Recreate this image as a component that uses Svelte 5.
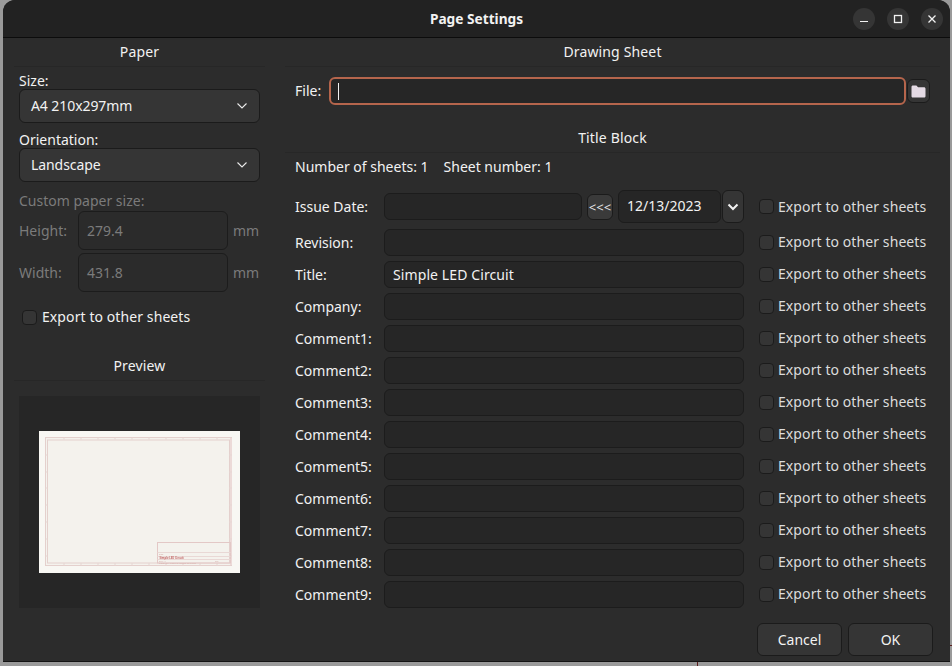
<script lang="ts">
	const rows = [
		{ label: 'Revision:', value: '' },
		{ label: 'Title:', value: 'Simple LED Circuit' },
		{ label: 'Company:', value: '' },
		{ label: 'Comment1:', value: '' },
		{ label: 'Comment2:', value: '' },
		{ label: 'Comment3:', value: '' },
		{ label: 'Comment4:', value: '' },
		{ label: 'Comment5:', value: '' },
		{ label: 'Comment6:', value: '' },
		{ label: 'Comment7:', value: '' },
		{ label: 'Comment8:', value: '' },
		{ label: 'Comment9:', value: '' }
	];
	// tick marks along the drawing sheet frame
	const xTicks = [17, 34, 51, 68, 85, 102, 119, 136, 153, 170];
	const yTicks = [24, 41, 57, 74, 91, 108, 125];
</script>

<span class="behind behind--right"></span>
<span class="behind behind--bottom"></span>

<div class="window">
	<header class="titlebar">
		<div class="titlebar__title">Page Settings</div>
		<div class="titlebar__buttons">
			<button class="wm" aria-label="Minimize">
				<svg width="10" height="10" viewBox="0 0 10 10"><path d="M1 7.500h8" stroke="#f2f2f2" stroke-width="1.200" fill="none" /></svg>
			</button>
			<button class="wm" aria-label="Maximize">
				<svg width="10" height="10" viewBox="0 0 10 10"><rect x="1.500" y="1.500" width="7" height="7" stroke="#f2f2f2" stroke-width="1.300" fill="none" /></svg>
			</button>
			<button class="wm" aria-label="Close">
				<svg width="10" height="10" viewBox="0 0 10 10"><path d="M1.500 1.500l7 7M8.500 1.500l-7 7" stroke="#f2f2f2" stroke-width="1.300" fill="none" /></svg>
			</button>
		</div>
	</header>

	<div class="content">
		<section class="left">
			<h2 class="section-title">Paper</h2>
			<div class="left__body">
				<div class="caption caption--first">Size:</div>
				<div class="combo">
					<span>A4 210x297mm</span>
					<svg width="12" height="8" viewBox="0 0 12 8"><path d="M1.500 1.500L6 6l4.500-4.500" stroke="#e8e8e8" stroke-width="1.100" fill="none" /></svg>
				</div>
				<div class="caption caption--orient">Orientation:</div>
				<div class="combo">
					<span>Landscape</span>
					<svg width="12" height="8" viewBox="0 0 12 8"><path d="M1.500 1.500L6 6l4.500-4.500" stroke="#e8e8e8" stroke-width="1.100" fill="none" /></svg>
				</div>
				<div class="caption caption--custom disabled">Custom paper size:</div>
				<div class="size-row disabled">
					<span class="size-row__label">Height:</span>
					<div class="size-row__input">279.4</div>
					<span>mm</span>
				</div>
				<div class="size-row disabled">
					<span class="size-row__label">Width:</span>
					<div class="size-row__input">431.8</div>
					<span>mm</span>
				</div>
				<label class="check check--left"><span class="check__box"></span>Export to other sheets</label>
			</div>
			<h2 class="section-title section-title--preview">Preview</h2>
			<div class="preview">
				<svg class="sheet" width="201" height="142" viewBox="0 0 201 142">
					<rect width="201" height="142" fill="#f8f7f3" />
					<rect x="6" y="6" width="187" height="129" fill="#f4f2ed" />
					<g class="sheet__ink">
						<rect x="6.500" y="6.500" width="186" height="128" fill="none" stroke="#e4d0cd" />
						<rect x="8.500" y="9" width="182" height="123" fill="none" stroke="#e4d0cd" />
						<rect x="191" y="7" width="2" height="127" fill="#ecdad8" />
						{#each xTicks as x}
							<path d="M{x + 8} 6.500v2M{x + 8} 132v2.500" stroke="#e6d6d3" fill="none" />
						{/each}
						{#each yTicks as y}
							<path d="M6.500 {y}h2M190 {y}h3" stroke="#e6d6d3" fill="none" />
						{/each}
						<rect x="118.500" y="111.500" width="73" height="20.500" fill="none" stroke="#e3c8c6" />
						<path d="M118.500 121.500h73M118.500 125.500h73M118.500 128.500h73" stroke="#e9d8d5" fill="none" />
						<text class="sheet__small" x="120" y="124">Date:</text>
						<text class="sheet__title" x="120.500" y="127.800">Simple LED Circuit</text>
						<text class="sheet__small" x="120" y="130.500">Size: A4</text>
						<text class="sheet__small" x="176" y="130.500">Rev:</text>
						<text class="sheet__small" x="120" y="132.500">KiCad E.D.A. kicad 7.0.9 simple_led_circuit</text>
					</g>
				</svg>
			</div>
		</section>

		<section class="right">
			<h2 class="section-title">Drawing Sheet</h2>
			<div class="file-row">
				<span class="file-row__label">File:</span>
				<div class="file-input"><span class="caret"></span></div>
				<button class="folder" aria-label="Browse">
					<svg width="15" height="13" viewBox="0 0 15 13"><path d="M.500 2C.500 1 1.100.500 2 .500h3.400L7 2.200h6c.900 0 1.500.600 1.500 1.500v7.300c0 1-.600 1.500-1.500 1.500H2c-.900 0-1.500-.500-1.500-1.500z" fill="#e4dae4" /></svg>
				</button>
			</div>
			<h2 class="section-title section-title--block">Title Block</h2>
			<div class="sheets">
				<span>Number of sheets: 1</span>
				<span>Sheet number: 1</span>
			</div>

			<div class="row row--date">
				<span class="row__label">Issue Date:</span>
				<div class="date">
					<input class="field field--date" readonly />
					<button class="copy-date">&lt;&lt;&lt;</button>
					<div class="date-picker">12/13/2023</div>
					<button class="date-drop" aria-label="Pick date">
						<svg width="12" height="8" viewBox="0 0 12 8"><path d="M1.500 1.500L6 6l4.500-4.500" stroke="#f2f2f2" stroke-width="2" fill="none" /></svg>
					</button>
				</div>
				<label class="check"><span class="check__box"></span>Export to other sheets</label>
			</div>
			{#each rows as row}
				<div class="row">
					<span class="row__label">{row.label}</span>
					<input class="field" value={row.value} readonly />
					<label class="check"><span class="check__box"></span>Export to other sheets</label>
				</div>
			{/each}

			<div class="actions">
				<button class="action">Cancel</button>
				<button class="action">OK</button>
			</div>
		</section>
	</div>
</div>

<style>
	:global(body) {
		margin: 0;
		background: #9a9a9a;
	}
	/* bits of the window underneath that peek out past the dialog */
	.behind {
		position: absolute;
		background: #5c1f1f;
	}
	.behind--right {
		left: 950px;
		top: 645px;
		width: 2px;
		height: 1px;
	}
	.behind--bottom {
		left: 697px;
		top: 662px;
		width: 1px;
		height: 4px;
	}
	.window {
		box-sizing: border-box;
		width: 947px;
		height: 662px;
		margin-left: 3px;
		display: flex;
		flex-direction: column;
		background: #2c2c2c;
		border-bottom: 1px solid #141414;
		border-radius: 12px 12px 0 0;
		overflow: hidden;
		color: #f2f2f2;
		font-family: 'Noto Sans', sans-serif;
		font-size: 14px;
		line-height: 20px;
		position: relative;
	}
	.titlebar {
		flex: none;
		height: 37px;
		position: relative;
		display: flex;
		align-items: center;
		justify-content: flex-end;
		background: #222222;
		border-bottom: 1px solid #0c0c0c;
	}
	.titlebar__title {
		position: absolute;
		left: 0;
		right: 0;
		text-align: center;
		font-weight: 700;
		font-size: 13.7px;
	}
	.titlebar__buttons {
		display: flex;
		gap: 12px;
		padding-right: 7px;
		position: relative;
	}
	.wm {
		width: 22px;
		height: 22px;
		padding: 0;
		border: 0;
		border-radius: 50%;
		background: #353535;
		display: flex;
		align-items: center;
		justify-content: center;
	}
	.content {
		flex: 1;
		display: flex;
		min-height: 0;
	}
	.left {
		flex: none;
		width: 251px;
		margin-left: 11px;
		display: flex;
		flex-direction: column;
	}
	.right {
		flex: none;
		width: 655px;
		margin-left: 20px;
		display: flex;
		flex-direction: column;
	}
	.section-title {
		margin: 0;
		height: 29px;
		box-sizing: border-box;
		border-bottom: 1px solid #272727;
		font-size: 14px;
		font-weight: 400;
		line-height: 28px;
		letter-spacing: 0.15px;
		text-align: center;
	}
	.section-title--preview {
		margin-top: 25px;
	}
	.section-title--block {
		margin-top: 19px;
	}
	.left__body {
		padding: 0 5px;
		display: flex;
		flex-direction: column;
	}
	.caption {
		height: 16px;
		line-height: 16px;
	}
	.caption--first {
		margin-top: 6px;
	}
	.caption--orient {
		margin-top: 9px;
	}
	.caption--custom {
		margin-top: 11px;
		margin-bottom: 2px;
	}
	.disabled {
		color: #7b7b7b;
	}
	.combo {
		box-sizing: border-box;
		height: 34px;
		width: 241px;
		display: flex;
		align-items: center;
		justify-content: space-between;
		padding: 0 11px;
		background: #353535;
		border: 1px solid #1b1b1b;
		border-radius: 6px;
		letter-spacing: -0.08px;
	}
	.size-row {
		display: flex;
		align-items: center;
		height: 39px;
		margin-bottom: 3px;
	}
	.size-row__label {
		width: 59px;
	}
	.size-row__input {
		box-sizing: border-box;
		width: 150px;
		height: 39px;
		margin-right: 5px;
		padding: 9px 8px;
		border: 1px solid #1c1c1c;
		border-radius: 6px;
		background: #2b2b2b;
	}
	.check {
		display: flex;
		align-items: center;
		gap: 5px;
		white-space: nowrap;
		color: #f2f2f2;
		letter-spacing: 0.09px;
	}
	.row .check {
		color: #dcdcdc;
		gap: 4px;
		margin: 0 0 1px 15px;
	}
	.row--date .check {
		margin-bottom: 0;
	}
	.check--left {
		margin: 12px 0 0 3px;
	}
	.check__box {
		box-sizing: border-box;
		width: 15px;
		height: 15px;
		background: #353535;
		border: 1px solid #1b1b1b;
		border-radius: 4px;
	}
	.preview {
		margin: 15px 5px 0;
		height: 212px;
		width: 241px;
		background: #262626;
		display: flex;
		align-items: center;
		justify-content: center;
	}
	.sheet {
		display: block;
	}
	.sheet__ink {
		filter: blur(0.3px);
	}
	.sheet__title {
		font-size: 2.700px;
		font-weight: 700;
		fill: #c46a6a;
	}
	.sheet__small {
		font-size: 1.900px;
		fill: #d3a9a7;
	}
	.file-row {
		display: flex;
		align-items: center;
		height: 28px;
		margin-top: 10px;
		padding-left: 10px;
	}
	.file-row__label {
		width: 34px;
	}
	.file-input {
		box-sizing: border-box;
		width: 577px;
		height: 28px;
		display: flex;
		align-items: center;
		padding-left: 7px;
		background: #262626;
		border: 2px solid #b5654c;
		border-radius: 6px;
	}
	.caret {
		width: 1px;
		height: 17px;
		background: #f2f2f2;
	}
	.folder {
		box-sizing: border-box;
		width: 23px;
		height: 24px;
		margin-left: 1px;
		padding: 0;
		display: flex;
		align-items: center;
		justify-content: center;
		background: #353535;
		border: 1px solid #1b1b1b;
		border-radius: 6px;
	}
	.sheets {
		display: flex;
		gap: 15px;
		padding-left: 10px;
		height: 20px;
		margin-top: 4px;
	}
	.row {
		display: flex;
		align-items: center;
		height: 27px;
		padding-left: 10px;
		margin-bottom: 5px;
	}
	.row--date {
		height: 33px;
		margin-top: 13px;
		margin-bottom: 6px;
	}
	.row__label {
		flex: none;
		width: 89px;
	}
	.field {
		box-sizing: border-box;
		width: 360px;
		height: 27px;
		padding: 0 8px;
		background: #262626;
		border: 1px solid #1c1c1c;
		border-radius: 6px;
		color: #f2f2f2;
		font: inherit;
		letter-spacing: 0.1px;
		outline: none;
	}
	.date {
		display: flex;
		align-items: center;
		width: 360px;
	}
	.field--date {
		width: 198px;
		flex: none;
	}
	.copy-date {
		box-sizing: border-box;
		width: 26px;
		height: 26px;
		margin-left: 5px;
		padding: 0;
		background: #3a3a3a;
		border: 1px solid #1b1b1b;
		border-radius: 6px;
		color: #e8e8e8;
		font: inherit;
		font-size: 13px;
	}
	.date-picker {
		box-sizing: border-box;
		width: 103px;
		height: 33px;
		margin-left: 5px;
		padding: 5px 8px;
		background: #262626;
		border: 1px solid #1c1c1c;
		border-radius: 6px;
	}
	.date-drop {
		box-sizing: border-box;
		width: 22px;
		height: 33px;
		margin-left: 1px;
		padding: 0;
		background: #353535;
		border: 1px solid #1b1b1b;
		border-radius: 6px;
	}
	.actions {
		display: flex;
		justify-content: flex-end;
		gap: 6px;
		margin-top: 10px;
		padding-right: 7px;
	}
	.action {
		box-sizing: border-box;
		width: 85px;
		height: 33px;
		background: #353535;
		border: 1px solid #1b1b1b;
		border-radius: 6px;
		color: #f2f2f2;
		font: inherit;
	}
</style>
